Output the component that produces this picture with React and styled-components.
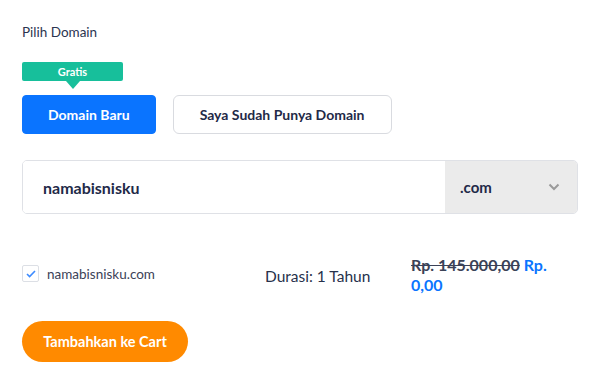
import React, { useState } from "react"
import styled, { createGlobalStyle } from "styled-components"

const GlobalStyle = createGlobalStyle`
  body {
    margin: 0;
    background: #fff;
    font-family: Lato, "Open Sans", sans-serif;
    color: #27314b;
  }
`

const Page = styled.div`
  width: 600px;
  height: 379px;
  box-sizing: border-box;
  padding: 24px 22px 0 22px;
`

const Label = styled.div`
  font-size: 13.5px;
  line-height: 16px;
  color: #2b3550;
`

const Tabs = styled.div`
  display: flex;
  align-items: flex-end;
  gap: 17px;
  margin-top: 22px;
`

const TabColumn = styled.div`
  display: flex;
  flex-direction: column;
`

const Badge = styled.div`
  position: relative;
  width: 101px;
  height: 19px;
  margin-bottom: 14px;
  background: #17bf9b;
  border-radius: 2px;
  color: #fff;
  font-size: 11px;
  font-weight: 700;
  line-height: 19px;
  text-align: center;

  &::after {
    content: "";
    position: absolute;
    left: 50%;
    bottom: -8px;
    margin-left: -7px;
    border-left: 7px solid transparent;
    border-right: 7px solid transparent;
    border-top: 8px solid #17bf9b;
  }
`

const Tab = styled.button`
  height: 39px;
  padding: 0 ${p => (p.$active ? "25px" : "26px")};
  box-sizing: border-box;
  border-radius: ${p => (p.$active ? "4px" : "6px")};
  border: 1px solid ${p => (p.$active ? "#0a74ff" : "#d9dbe0")};
  background: ${p => (p.$active ? "#0a74ff" : "#fff")};
  color: ${p => (p.$active ? "#fff" : "#1f2a48")};
  font-family: Lato, "Open Sans", sans-serif;
  font-size: 14px;
  font-weight: 700;
  cursor: pointer;
`

const SearchBox = styled.div`
  display: flex;
  margin-top: 26px;
  height: 52px;
  border: 1px solid #dfe1e6;
  border-radius: 5px;
  overflow: hidden;
`

const NameInput = styled.input`
  flex: 1;
  border: none;
  outline: none;
  padding: 0 0 0 20px;
  font-family: Lato, "Open Sans", sans-serif;
  font-size: 16px;
  font-weight: 700;
  color: #1f2a48;
`

const Tld = styled.div`
  width: 132px;
  display: flex;
  align-items: center;
  justify-content: space-between;
  padding: 0 17px 0 15px;
  box-sizing: border-box;
  background: #ebebeb;
  font-size: 15px;
  font-weight: 700;
  color: #1f2a48;
`

const ResultRow = styled.div`
  display: flex;
  align-items: flex-start;
  margin-top: 41px;
`

const DomainCell = styled.label`
  display: flex;
  align-items: center;
  gap: 8px;
  width: 243px;
  margin-top: 10px;
  font-size: 13.5px;
  color: #3b4257;
`

const Check = styled.span`
  width: 15px;
  height: 15px;
  border: 1px solid #dcdfe5;
  border-radius: 2px;
  display: flex;
  align-items: center;
  justify-content: center;
`

const Duration = styled.div`
  width: 146px;
  margin-top: 12px;
  font-size: 15.5px;
  color: #27314b;
`

const Price = styled.div`
  width: 160px;
  font-size: 16px;
  font-weight: 700;
  line-height: 20px;
`

const OldPrice = styled.span`
  color: #3b4257;
  text-decoration: line-through;
`

const NewPrice = styled.span`
  color: #0a74ff;
`

const CartButton = styled.button`
  margin-top: 26px;
  height: 41px;
  width: 166px;
  border: none;
  border-radius: 21px;
  background: #ff8a00;
  color: #fff;
  font-family: Lato, "Open Sans", sans-serif;
  font-size: 14.5px;
  font-weight: 700;
  cursor: pointer;
`

const App = () => {
  const [active, setActive] = useState(0)
  const [name, setName] = useState("namabisnisku")

  return (
    <Page>
      <GlobalStyle />
      <Label>Pilih Domain</Label>
      <Tabs>
        <TabColumn>
          <Badge>Gratis</Badge>
          <Tab $active={active === 0} onClick={() => setActive(0)}>
            Domain Baru
          </Tab>
        </TabColumn>
        <Tab $active={active === 1} onClick={() => setActive(1)}>
          Saya Sudah Punya Domain
        </Tab>
      </Tabs>
      <SearchBox>
        <NameInput value={name} onChange={e => setName(e.target.value)} />
        <Tld>
          .com
          <svg width="12" height="8" viewBox="0 0 12 8">
            <path d="M1.5 1.5 6 6l4.5-4.5" fill="none" stroke="#9a9a9a" strokeWidth="2" />
          </svg>
        </Tld>
      </SearchBox>
      <ResultRow>
        <DomainCell>
          <Check>
            <svg width="10" height="8" viewBox="0 0 10 8">
              <path d="M1 4l2.6 2.6L9 1" fill="none" stroke="#3d8bff" strokeWidth="1.6" />
            </svg>
          </Check>
          namabisnisku.com
        </DomainCell>
        <Duration>Durasi: 1 Tahun</Duration>
        <Price>
          <OldPrice>Rp. 145.000,00</OldPrice> <NewPrice>Rp. 0,00</NewPrice>
        </Price>
      </ResultRow>
      <CartButton>Tambahkan ke Cart</CartButton>
    </Page>
  )
}

export default App
